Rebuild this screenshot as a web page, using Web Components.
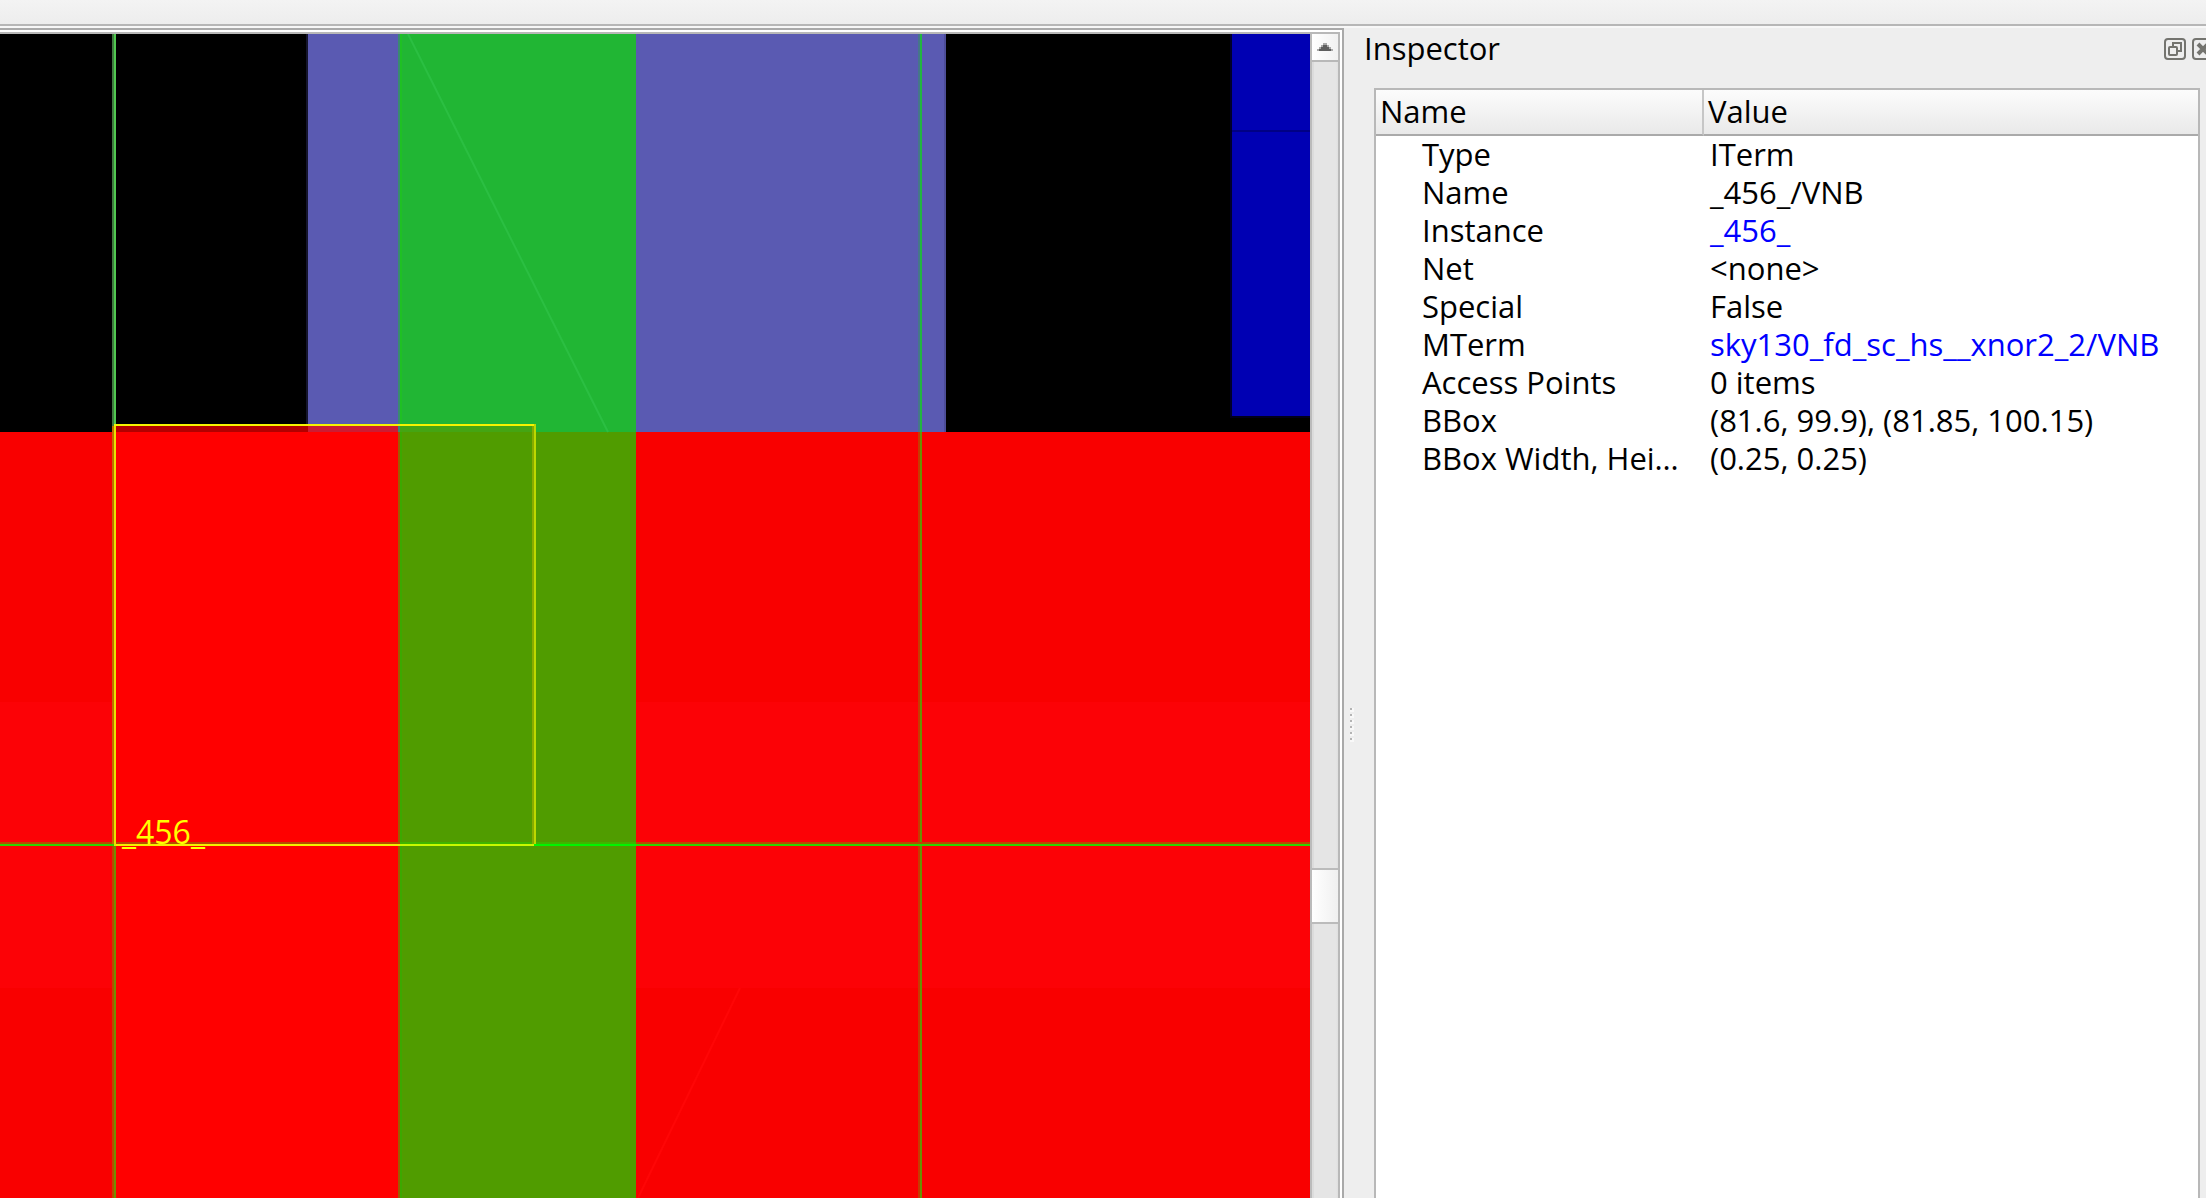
<!DOCTYPE html>
<html lang="en">
<head>
<meta charset="utf-8">
<title>Layout viewer</title>
<style>
html, body { margin: 0; height: 100%; overflow: hidden; }
body { font-family: "Open Sans", "Noto Sans", sans-serif; font-size: 31px; color: #000; background: #eee; }
</style>
</head>
<body>
<viewer-app></viewer-app>

<template id="viewer-app">
  <style>
    :host { display: flex; flex-direction: column; height: 100vh; background: #eee; }
    .toolbar { flex: 0 0 24px; background: linear-gradient(#f3f3f3, #ededed); border-bottom: 2px solid #b6b6b6; }
    main { flex: 1; min-height: 0; display: flex; border-top: 2px solid #f7f7f7; }
    .view { flex: 1; min-width: 0; display: flex; border-top: 2px solid #a9a9a9; border-right: 2px solid #a9a9a9; }
    .frame { flex: 1; min-width: 0; display: flex; border-top: 2px solid #fff; border-right: 2px solid #fff; }
    .inner { flex: 1; min-width: 0; display: flex; border-top: 2px solid #b8b8b8; border-right: 2px solid #b8b8b8; }
    layout-canvas { flex: 1; min-width: 0; }
  </style>
  <div class="toolbar"></div>
  <main>
    <div class="view"><div class="frame"><div class="inner">
      <layout-canvas></layout-canvas>
      <scroll-column></scroll-column>
    </div></div></div>
    <dock-splitter></dock-splitter>
    <inspector-panel>
      <span slot="title">Inspector</span>
    </inspector-panel>
  </main>
</template>

<template id="layout-canvas">
  <style>
    :host { display: block; background: #000; overflow: hidden; }
    svg { display: block; width: 100%; height: 100%; }
    rect { shape-rendering: crispEdges; }
    text { fill: #ff0; font-size: 32px; }
  </style>
  <svg role="img" aria-label="Chip layout">
    <!-- upper metal shapes -->
    <rect x="306" y="0" width="2" height="398" fill="#15152c"/>
    <rect x="308" y="0" width="638" height="398" fill="#5a5ab2"/>
    <rect x="944" y="0" width="2" height="398" fill="#4d4d99"/>
    <rect x="1230" y="0" width="2" height="384" fill="#00002a"/>
    <rect x="1232" y="0" width="100%" height="382" fill="#0000b3"/>
    <rect x="1232" y="96" width="100%" height="2" fill="#000085"/>
    <rect x="1230" y="382" width="100%" height="2" fill="#00001c"/>
    <!-- power rail -->
    <rect x="0" y="398" width="100%" height="100%" fill="#f90000"/>
    <rect x="0" y="668" width="100%" height="286" fill="#fc0206"/>
    <rect x="116" y="398" width="284" height="100%" fill="#f00"/>
    <rect x="116" y="392" width="192" height="6" fill="#b30000"/>
    <rect x="308" y="392" width="92" height="6" fill="#cc1c33"/>
    <!-- vertical strap -->
    <rect x="398" y="0" width="238" height="398" fill="#21b634"/>
    <rect x="398" y="0" width="2" height="398" fill="#3a8a70"/>
    <rect x="400" y="0" width="2" height="398" fill="#1fc024"/>
    <rect x="400" y="392" width="134" height="6" fill="#44a513"/>
    <rect x="398" y="398" width="238" height="100%" fill="#509c00"/>
    <rect x="398" y="398" width="2" height="100%" fill="#a05a00"/>
    <rect x="400" y="398" width="2" height="100%" fill="#3ca800"/>
    <path d="M408 0L608 398" stroke="#2bbf42" stroke-width="2"/>
    <path d="M740 954L638 1164" stroke="#ff0606" stroke-width="2"/>
    <!-- tracks -->
    <rect x="112" y="0" width="2" height="398" fill="#3f7a3f"/>
    <rect x="114" y="0" width="2" height="398" fill="#4fc94f"/>
    <rect x="112" y="812" width="2" height="100%" fill="#b84a00"/>
    <rect x="114" y="812" width="2" height="100%" fill="#709000"/>
    <rect x="918" y="0" width="2" height="398" fill="#46758c"/>
    <rect x="920" y="0" width="2" height="398" fill="#22b640"/>
    <rect x="918" y="398" width="2" height="100%" fill="#c83a00"/>
    <rect x="920" y="398" width="2" height="100%" fill="#6a9000"/>
    <rect x="0" y="808" width="100%" height="2" fill="#b84a00"/>
    <rect x="0" y="810" width="100%" height="2" fill="#2cd400"/>
    <rect x="400" y="808" width="236" height="2" fill="#3fb400"/>
    <rect x="400" y="810" width="236" height="2" fill="#00f400"/>
    <!-- selected pin -->
    <rect x="112" y="392" width="2" height="418" fill="#c07000"/>
    <rect x="114" y="390" width="2" height="422" fill="#e8e400"/>
    <rect x="532" y="392" width="2" height="418" fill="#86ac00"/>
    <rect x="534" y="390" width="2" height="420" fill="#bcd800"/>
    <rect x="114" y="390" width="420" height="2" fill="#f6f200"/>
    <rect x="116" y="810" width="284" height="2" fill="#f4f000"/>
    <rect x="400" y="810" width="134" height="2" fill="#c8f800"/>
    <text x="122" y="810">_456_</text>
  </svg>
</template>

<template id="scroll-column">
  <style>
    :host { display: flex; flex-direction: column; flex: 0 0 26px; border-left: 2px solid #bbb; background: linear-gradient(90deg, #dcdcdc 2px, #e5e5e5 2px 24px, #dfdfdf); }
    button { flex: 0 0 28px; box-sizing: border-box; padding: 0; border: 0; border-bottom: 2px solid #b8b8b8; background: linear-gradient(90deg, #fff, #f1f1f1); display: flex; align-items: center; justify-content: center; }
    .before { flex: 0 1 806px; }
    .thumb { flex: 0 0 52px; border: solid #bbb; border-width: 2px 0; background: linear-gradient(90deg, #fff, #f0f0f0); }
  </style>
  <button aria-label="Scroll up"><svg width="16" height="8" viewBox="0 0 16 8" shape-rendering="crispEdges"><path d="M6 0h4v2h2v2h2v2h2v2H0V6h2V4h2V2h2z" fill="#aaa"/><path d="M6 2h4v2h2v2h2v2H2V6h2V4h2z" fill="#5e5e5e"/></svg></button>
  <div class="before"></div>
  <div class="thumb"></div>
</template>

<template id="dock-splitter">
  <style>
    :host { display: flex; align-items: center; flex: 0 0 12px; box-sizing: border-box; padding: 224px 0 0 6px; margin-right: 10px; cursor: col-resize; }
    svg { display: block; }
  </style>
  <svg width="4" height="34" shape-rendering="crispEdges">
    <path d="M2 0v4M2 6v4M2 12v4M2 18v4M2 24v4M2 30v4" stroke="#f8f8f8" stroke-width="4"/>
    <path d="M1 0v2M1 6v2M1 12v2M1 18v2M1 24v2M1 30v2" stroke="#b4b4b4" stroke-width="2"/>
  </svg>
</template>

<template id="inspector-panel">
  <style>
    :host { flex: 0 0 842px; margin-left: -2px; display: flex; flex-direction: column; overflow: hidden; min-height: 0; }
    header { flex: 0 0 60px; display: flex; align-items: flex-start; }
    h1 { flex: 1; margin: 0; font: inherit; line-height: 40px; }
    .tools { display: flex; gap: 6px; padding-top: 10px; margin-right: -8px; }
    .tools button { width: 22px; height: 22px; padding: 0; border: 0; background: none; }
    .tools svg { display: block; }
    .box { flex: 1; min-height: 0; margin: 0 6px 0 10px; border: 2px solid #b8b8b8; border-bottom: 0; background: #fff; }
    table { width: 100%; table-layout: fixed; border-collapse: separate; border-spacing: 0; }
    .name { width: 328px; }
    th, td { text-align: left; font-weight: 400; padding: 0 0 2px; line-height: 36px; white-space: nowrap; }
    thead th { line-height: 42px; padding-left: 4px; border-bottom: 2px solid #aaa; background: linear-gradient(#fcfcfc, #e9e9e9); }
    thead th:first-child { border-right: 2px solid #c6c6c6; }
    tbody th { padding-left: 46px; }
    tbody td { padding-left: 6px; }
    a { color: #00f; text-decoration: none; }
  </style>
  <header>
    <h1><slot name="title"></slot></h1>
    <div class="tools">
      <button aria-label="Float"><svg width="22" height="22" viewBox="0 0 22 22" fill="none" stroke="#74746f" stroke-width="2"><rect x="1" y="1" width="20" height="20" rx="3"/><rect x="5" y="9" width="8" height="8" rx="1"/><path d="M9 9V5h8v8h-4"/></svg></button>
      <button aria-label="Close"><svg width="22" height="22" viewBox="0 0 22 22" fill="none" stroke="#74746f" stroke-width="2"><rect x="1" y="1" width="20" height="20" rx="3"/><path d="M6 6l10 10M16 6L6 16" stroke-width="4"/></svg></button>
    </div>
  </header>
  <div class="box">
    <table>
      <colgroup><col class="name"><col></colgroup>
      <thead><tr><th scope="col">Name</th><th scope="col">Value</th></tr></thead>
      <tbody>
        <tr><th scope="row">Type</th><td>ITerm</td></tr>
        <tr><th scope="row">Name</th><td>_456_/VNB</td></tr>
        <tr><th scope="row">Instance</th><td><a href="#instance">_456_</a></td></tr>
        <tr><th scope="row">Net</th><td>&lt;none&gt;</td></tr>
        <tr><th scope="row">Special</th><td>False</td></tr>
        <tr><th scope="row">MTerm</th><td><a href="#mterm">sky130_fd_sc_hs__xnor2_2/VNB</a></td></tr>
        <tr><th scope="row">Access Points</th><td>0 items</td></tr>
        <tr><th scope="row">BBox</th><td>(81.6, 99.9), (81.85, 100.15)</td></tr>
        <tr><th scope="row">BBox Width, Hei…</th><td>(0.25, 0.25)</td></tr>
      </tbody>
    </table>
  </div>
</template>

<script>
for (const name of ['layout-canvas', 'scroll-column', 'dock-splitter', 'inspector-panel', 'viewer-app']) {
  customElements.define(name, class extends HTMLElement {
    constructor() {
      super();
      this.attachShadow({ mode: 'open' }).append(document.getElementById(name).content.cloneNode(true));
    }
  });
}
</script>
</body>
</html>
